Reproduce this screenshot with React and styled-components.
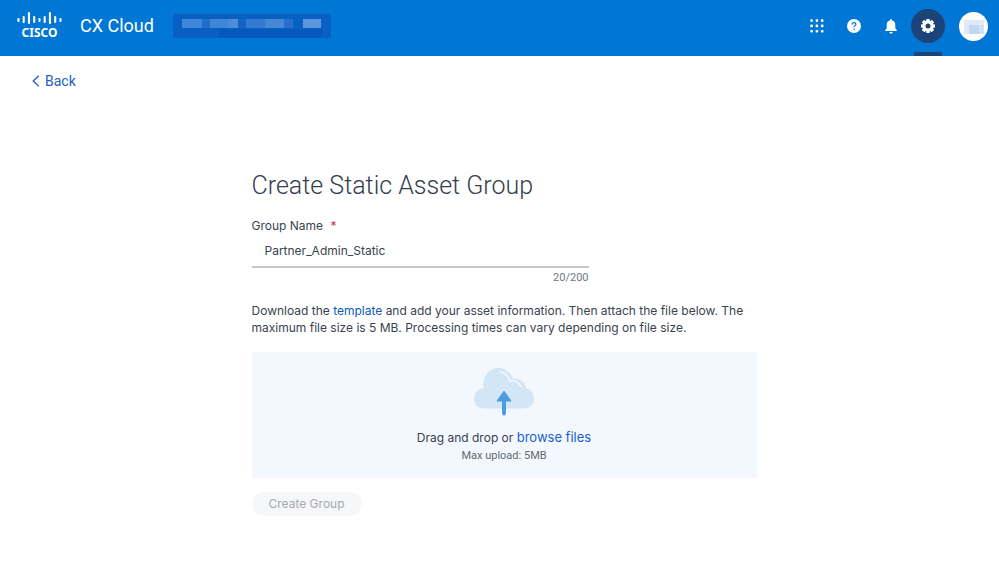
import React, { useState } from "react";
import styled, { createGlobalStyle } from "styled-components";

const GlobalStyle = createGlobalStyle`
  * {
    box-sizing: border-box;
  }
  body {
    margin: 0;
    background: #ffffff;
    color: #39434f;
    font-family: Inter, "Liberation Sans", sans-serif;
    font-size: 12px;
    line-height: 17px;
  }
  button,
  input {
    font: inherit;
  }
`;

const Header = styled.header`
  display: flex;
  align-items: flex-start;
  justify-content: space-between;
  height: 56px;
  padding: 0 11px 0 17px;
  background: #0076d5;
`;

const Brand = styled.div`
  display: flex;
  align-items: center;
  height: 52px;
`;

const Logo = styled.a`
  display: flex;
  flex-direction: column;
  align-items: center;
  gap: 1px;
  width: 45px;
  margin-right: 18px;
  color: #ffffff;
  font-family: "Noto Sans", sans-serif;
  font-weight: 700;
  line-height: 14px;
  text-decoration: none;
`;

const ProductName = styled.span`
  margin-right: 19px;
  color: #ffffff;
  font-family: Roboto, sans-serif;
  font-size: 18px;
  line-height: 24px;
`;

const AccountName = styled.svg`
  display: block;
`;

const Tools = styled.nav`
  display: flex;
  align-items: flex-start;
  height: 56px;
`;

const ToolButton = styled.button`
  display: flex;
  align-items: center;
  justify-content: center;
  width: 37px;
  height: 52px;
  padding: 0;
  border: none;
  background: transparent;
  color: #ffffff;
`;

const ActiveTool = styled.div`
  position: relative;
  display: flex;
  align-items: center;
  height: 56px;
  padding: 0 0 4px 2px;
  margin-right: 14px;

  &::after {
    content: "";
    position: absolute;
    bottom: 0;
    left: 5px;
    width: 28px;
    height: 4px;
    border-radius: 2px 2px 0 0;
    background: #1d4478;
  }
`;

const RoundButton = styled.button`
  display: flex;
  align-items: center;
  justify-content: center;
  width: ${(props) => props.$size}px;
  height: ${(props) => props.$size}px;
  padding: 0;
  border: none;
  border-radius: 50%;
  background: ${(props) => props.$color};
  color: #ffffff;
`;

const Avatar = styled(RoundButton)`
  margin-top: 12px;
`;

const Page = styled.main`
  padding: 16px 23px 32px 32px;
`;

const BackLink = styled.a`
  display: inline-flex;
  align-items: center;
  gap: 5px;
  color: #2460c5;
  font-family: Roboto, sans-serif;
  font-size: 14px;
  line-height: 18px;
  text-decoration: none;
`;

const Form = styled.form`
  max-width: 505px;
  margin: 80px auto 0;
`;

const Title = styled.h1`
  margin: 0 0 16px;
  color: #333e4d;
  font-family: Roboto, sans-serif;
  font-size: 25px;
  font-weight: 300;
  line-height: 30px;
`;

const Field = styled.div`
  display: flex;
  flex-direction: column;
  max-width: 337px;
  margin-bottom: 16px;
`;

const Label = styled.label`
  line-height: 17px;
`;

const Required = styled.span`
  margin-left: 4px;
  color: #d0343f;
`;

const Input = styled.input`
  width: 100%;
  height: 34px;
  padding: 0 13px;
  border: none;
  border-bottom: 2px solid #c6c7ca;
  background: transparent;
  color: #39434f;
  outline: none;
`;

const Counter = styled.span`
  align-self: flex-end;
  margin-top: 2px;
  color: #717780;
  font-family: Roboto, sans-serif;
  font-size: 11px;
  line-height: 16px;
`;

const Text = styled.p`
  margin: 0 0 16px;
`;

const Link = styled.a`
  color: #0b5cb8;
  text-decoration: none;
`;

const DropZone = styled.section`
  display: flex;
  flex-direction: column;
  align-items: center;
  padding: 15px 16px 14px;
  margin-bottom: 14px;
  background: #f2f8fe;
`;

const DropText = styled.p`
  margin: 12px 0 1px;
  line-height: 18px;
`;

const BrowseButton = styled.button`
  padding: 0;
  border: none;
  background: transparent;
  color: #1d5fd0;
  font-size: 13px;
  line-height: 17px;
`;

const Hint = styled.small`
  color: #626973;
  font-family: Roboto, sans-serif;
  font-size: 11px;
  line-height: 16px;
`;

const SubmitButton = styled.button`
  display: block;
  height: 24px;
  padding: 0 17px;
  border: none;
  border-radius: 12px;
  background: #f6f7f9;
  color: #a7a9ac;
  line-height: 24px;
`;

const bars = [4, 7, 12, 7, 4, 7, 12, 7, 4];
const barTops = [6, 4, 0, 4, 6, 4, 0, 4, 6];

const LogoBars = () => (
  <svg width="45" height="13" viewBox="0 0 45 13" aria-hidden="true">
    {bars.map((height, i) => (
      <rect
        key={i}
        x={0.4 + i * 5.25}
        y={barTops[i]}
        width="2.1"
        height={height}
        rx="1"
        fill="#ffffff"
      />
    ))}
  </svg>
);

const redacted = [
  [9, 20, "#3f86d6"],
  [29, 8, "#216fcb"],
  [37, 18, "#3f86d6"],
  [55, 10, "#4c8cd8"],
  [65, 8, "#1763c4"],
  [73, 19, "#347bcf"],
  [92, 19, "#4688d5"],
  [111, 9, "#266fca"],
  [130, 18, "#5c97dd"],
];

const GridIcon = () => (
  <svg width="14" height="14" viewBox="0 0 14 14" fill="#ffffff">
    {[0, 5.3, 10.6].map((y) =>
      [0, 5.3, 10.6].map((x) => (
        <rect key={`${x}-${y}`} x={x + 0.3} y={y + 0.3} width="2.6" height="2.6" rx="0.8" />
      ))
    )}
  </svg>
);

const HelpIcon = () => (
  <svg width="14" height="14" viewBox="0 0 14 14">
    <circle cx="7" cy="7" r="7" fill="#ffffff" />
    <path
      d="M5.1 5.4c0-1.1.8-1.8 1.9-1.8s1.9.7 1.9 1.7c0 1.3-1.8 1.4-1.8 2.9"
      fill="none"
      stroke="#0076d5"
      strokeWidth="1.2"
    />
    <circle cx="7.1" cy="10.2" r="0.8" fill="#0076d5" />
  </svg>
);

const BellIcon = () => (
  <svg width="12" height="15" viewBox="0 0 12 15" fill="#ffffff">
    <path d="M6 .3c.7 0 1.1.5 1.1 1.1 2.1.5 3.2 2.2 3.2 4.3v3.6l1.5 1.9v.9H.2v-.9l1.5-1.9V5.7c0-2.1 1.1-3.8 3.200-4.3C4.900.8 5.300.3 6 .3zM4.300 12.900h3.400c-.2 1-.8 1.600-1.700 1.600s-1.500-.6-1.700-1.600z" />
  </svg>
);

const GearIcon = () => (
  <svg width="16" height="16" viewBox="0 0 16 16" fill="#ffffff">
    {[0, 45, 90, 135].map((angle) => (
      <rect key={angle} x="6.2" y="1" width="3.6" height="14" rx="0.8" transform={`rotate(${angle} 8 8)`} />
    ))}
    <circle cx="8" cy="8" r="5.4" />
    <circle cx="8" cy="8" r="2.5" fill="#1d4478" />
  </svg>
);

const CloudIcon = () => (
  <svg width="62" height="50" viewBox="0 0 62 50" aria-hidden="true">
    <path
      d="M11 41.5C5 41.5 1 37.5 1 31.5c0-5.5 4-9.8 9.3-10.3C9.5 10 15.5 1 25.5 1c6 0 10.5 3 13 8 .6 1.2 1.5 2.6 2.8 2.7C48 11.5 52.5 15.5 53 21.2 58 22.2 61 26.2 61 31c0 6-4.3 10.5-10 10.5z"
      fill="#d2e6f6"
    />
    <path
      d="M27 5c5 .8 8.5 4.3 10.2 9.3 1.2-.5 2.5-.7 4-.3 3.2.8 5.5 2.8 7 5.8"
      fill="none"
      stroke="#f2f8fe"
      strokeWidth="1.6"
      strokeLinecap="round"
    />
    <path
      d="M31 24.2 38 34h-5.5v12.5a1.5 1.5 0 0 1-3 0V34H24z"
      fill="#4b9ce0"
      stroke="#4b9ce0"
      strokeLinejoin="round"
    />
  </svg>
);

const App = () => {
  const [name, setName] = useState("Partner_Admin_Static");

  return (
    <>
      <GlobalStyle />
      <Header>
        <Brand>
          <Logo href="#">
            <LogoBars />
            CISCO
          </Logo>
          <ProductName>CX Cloud</ProductName>
          <AccountName width="158" height="24" viewBox="0 0 158 24" aria-hidden="true">
            <rect width="158" height="24" fill="#0861c2" />
            <rect y="15" x="46" width="103" height="9" fill="#0659bc" />
            {redacted.map(([x, width, fill]) => (
              <rect key={x} x={x} y="5" width={width} height="9" fill={fill} />
            ))}
          </AccountName>
        </Brand>
        <Tools>
          <ToolButton type="button" aria-label="Applications">
            <GridIcon />
          </ToolButton>
          <ToolButton type="button" aria-label="Help">
            <HelpIcon />
          </ToolButton>
          <ToolButton type="button" aria-label="Notifications">
            <BellIcon />
          </ToolButton>
          <ActiveTool>
            <RoundButton type="button" $size={34} $color="#1d4478" aria-label="Settings">
              <GearIcon />
            </RoundButton>
          </ActiveTool>
          <Avatar type="button" $size={29} $color="#ffffff" aria-label="Account">
            <svg width="20" height="14" viewBox="0 0 20 14">
              <rect width="20" height="14" fill="#e0eaf7" />
              <rect x="5" y="5" width="10" height="9" fill="#c2d8f0" />
              <rect x="15" y="5" width="5" height="9" fill="#d2e2f4" />
            </svg>
          </Avatar>
        </Tools>
      </Header>
      <Page>
        <BackLink href="#">
          <svg width="8" height="12" viewBox="0 0 8 12" fill="none" stroke="#2460c5" strokeWidth="1.3">
            <path d="M6.8 0.8 1.2 6l5.6 5.2" />
          </svg>
          Back
        </BackLink>
        <Form onSubmit={(e) => e.preventDefault()}>
          <Title>Create Static Asset Group</Title>
          <Field>
            <Label htmlFor="name">
              Group Name <Required>*</Required>
            </Label>
            <Input
              type="text"
              id="name"
              name="name"
              maxLength={200}
              value={name}
              onChange={(event) => setName(event.target.value)}
            />
            <Counter>{name.length}/200</Counter>
          </Field>
          <Text>
            Download the <Link href="#">template</Link> and add your asset information. Then attach
            the file below. The maximum file size is 5 MB. Processing times can vary depending on
            file size.
          </Text>
          <DropZone>
            <CloudIcon />
            <DropText>
              Drag and drop or <BrowseButton type="button">browse files</BrowseButton>
            </DropText>
            <Hint>Max upload: 5MB</Hint>
          </DropZone>
          <SubmitButton type="submit" disabled>
            Create Group
          </SubmitButton>
        </Form>
      </Page>
    </>
  );
};

export default App;
